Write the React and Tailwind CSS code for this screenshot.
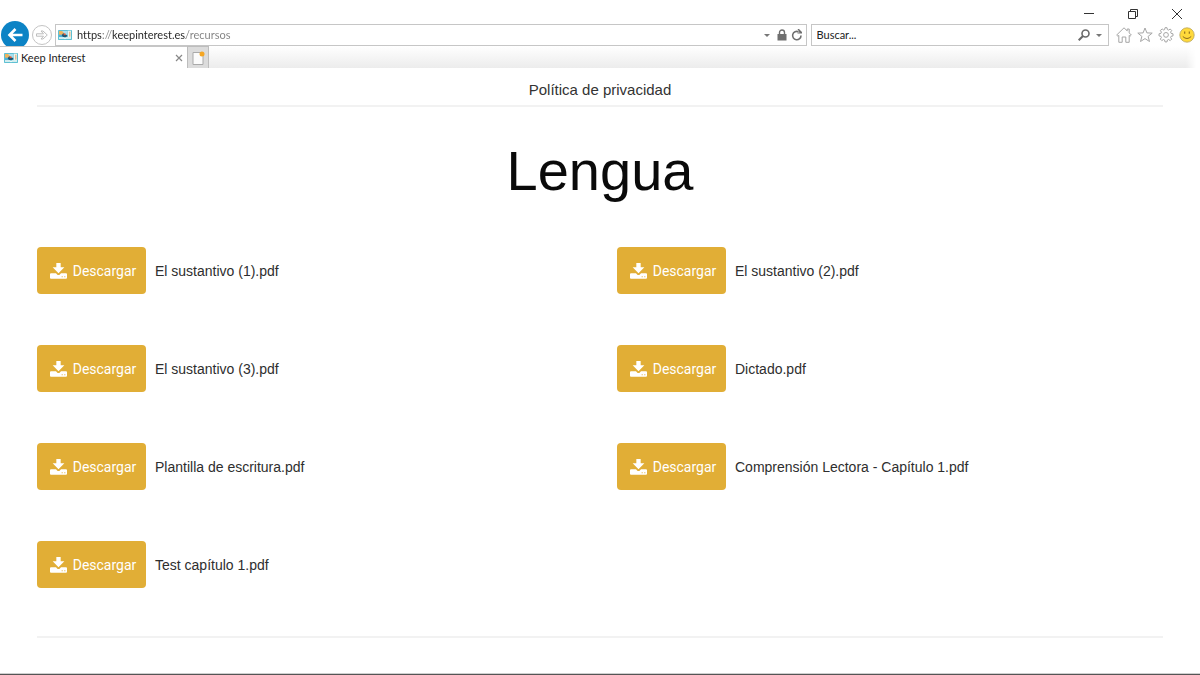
import { useState } from "react"

const resources = [
    "El sustantivo (1).pdf",
    "El sustantivo (2).pdf",
    "El sustantivo (3).pdf",
    "Dictado.pdf",
    "Plantilla de escritura.pdf",
    "Comprensión Lectora - Capítulo 1.pdf",
    "Test capítulo 1.pdf",
]

function Favicon() {
    return (
        <svg className="h-[10px] w-[14px] shrink-0" viewBox="0 0 42 30" aria-hidden="true">
            <rect width="42" height="30" rx="2" fill="#5fc0d3" />
            <rect x="3" y="3" width="25" height="12" fill="#a8dff0" />
            <path d="M3 3h9l6 6-5 6H3z" fill="#f0b45c" />
            <rect x="29" y="2" width="10" height="20" fill="#eef6f0" />
            <rect x="34" y="5" width="3" height="15" fill="#e2a06a" />
            <rect x="3" y="14" width="25" height="8" fill="#4cb2dc" />
            <path d="M11 16l5-7 3 5 9 1-3 6H15z" fill="#23566f" />
            <path d="M16 12l5-3 3 5-5 2z" fill="#e2603c" />
            <path d="M3 22h15l3 2 3-2h15v4H24l-3 2-3-2H3z" fill="#f7fbf8" />
        </svg>
    )
}

function DownloadIcon() {
    return (
        <svg className="h-4 w-[17px] shrink-0" viewBox="0 0 51 48" fill="white" aria-hidden="true">
            <path d="M19 0h13v13h11L25.500 31 8 13h11z" />
            <path
                fillRule="evenodd"
                d="M3 31h15l4 4q3.500 2.500 7 0l4-4h15q3 0 3 3v10q0 3-3 3H3q-3 0-3-3V34q0-3 3-3zM35 40v3h3v-3zM43 40v3h3v-3z"
            />
        </svg>
    )
}

function WindowControls() {
    return (
        <div className="flex h-6 items-center justify-end gap-8 pt-1 pr-[17px] text-[#333]">
            <button type="button" aria-label="Minimizar">
                <svg className="h-3 w-3" viewBox="0 0 12 12" stroke="currentColor">
                    <path d="M1 5.5h10" />
                </svg>
            </button>
            <button type="button" aria-label="Restaurar">
                <svg className="h-3 w-3" viewBox="0 0 12 12" fill="none" stroke="currentColor">
                    <path d="M1.500 3.500h7v7h-7zM3.500 3V1.500h7v7H9" />
                </svg>
            </button>
            <button type="button" aria-label="Cerrar">
                <svg className="h-3 w-3" viewBox="0 0 12 12" stroke="currentColor">
                    <path d="M1 1l10 10M11 1L1 11" />
                </svg>
            </button>
        </div>
    )
}

function Caret() {
    return (
        <svg className="h-[3px] w-[6px]" viewBox="0 0 6 3" fill="#777" aria-hidden="true">
            <path d="M0 0h6L3 3z" />
        </svg>
    )
}

function AddressBar() {
    const [url, setUrl] = useState("https://keepinterest.es/recursos")
    const [search, setSearch] = useState("")

    return (
        <div className="flex h-[22px] items-center pr-[5px] pl-px">
            <button
                type="button"
                aria-label="Atrás"
                className="-my-1 flex h-7 w-7 shrink-0 items-center justify-center rounded-full bg-[#0c83c5]">
                <svg className="h-4 w-4" viewBox="0 0 16 16" fill="none" stroke="white" strokeWidth="2.6">
                    <path d="M15.5 8H2M8.500 2L2.500 8l6 6" />
                </svg>
            </button>
            <button
                type="button"
                aria-label="Adelante"
                className="ml-[3px] flex h-5 w-5 shrink-0 items-center justify-center rounded-full border border-[#c4c4c4]">
                <svg className="h-3 w-3" viewBox="0 0 12 12" fill="none" stroke="#bdbdbd">
                    <path d="M.5 4.800h7L5 2h2L11.300 6 7 10H5l2.500-2.800h-7z" />
                </svg>
            </button>
            <div className="ml-[3px] flex h-[22px] flex-1 items-center border border-[#c6c6c6] pr-[3px] pl-[2px]">
                <Favicon />
                <input
                    className="ml-[5px] min-w-0 flex-1 bg-[linear-gradient(90deg,#222_26px,#888_26px,#888_35px,#222_35px,#222_109px,#808080_109px)] bg-clip-text text-[11px] text-transparent outline-none"
                    type="text"
                    aria-label="Dirección"
                    value={url}
                    onChange={(e) => setUrl(e.target.value)}
                />
                <button type="button" aria-label="Mostrar direcciones" className="mr-[7px]">
                    <Caret />
                </button>
                <svg className="mr-1 h-3 w-[10px]" viewBox="0 0 10 12" aria-hidden="true">
                    <path d="M2.500 6V3.500a2.500 2.500 0 0 1 5 0V6" fill="none" stroke="#6f6f6f" strokeWidth="1.400" />
                    <rect x=".5" y="5" width="9" height="6.500" fill="#6f6f6f" />
                </svg>
                <button type="button" aria-label="Actualizar">
                    <svg className="h-3 w-3" viewBox="0 0 12 12" aria-hidden="true">
                        <path d="M10 6.500A4.200 4.200 0 1 1 7.500 2.700" fill="none" stroke="#6f6f6f" strokeWidth="1.600" />
                        <path d="M6.500 0H8l3 3v1.500H6.500V3.500H8.500z" fill="#6f6f6f" />
                    </svg>
                </button>
            </div>
            <div className="ml-1 flex h-[22px] w-[25%] items-center border border-[#c6c6c6] pr-[6px] pl-[5px]">
                <input
                    className="min-w-0 flex-1 text-[11px] text-[#222] outline-none placeholder:text-[#222]"
                    type="text"
                    aria-label="Buscar"
                    placeholder="Buscar..."
                    value={search}
                    onChange={(e) => setSearch(e.target.value)}
                />
                <button type="button" aria-label="Buscar" className="mr-[6px]">
                    <svg className="h-3 w-3" viewBox="0 0 12 12" fill="none" stroke="#6a6a6a">
                        <circle cx="7.500" cy="4.500" r="3.500" strokeWidth="1.600" />
                        <path d="M5 7L.7 11.300" strokeWidth="2" />
                    </svg>
                </button>
                <button type="button" aria-label="Proveedores de búsqueda">
                    <Caret />
                </button>
            </div>
            <div className="ml-[7px] flex shrink-0 items-center gap-[5px]">
                <button type="button" aria-label="Inicio">
                    <svg className="h-4 w-4" viewBox="0 0 16 16" fill="none" stroke="#a6a6a6">
                        <path d="M8 .8L.7 8l1.200 1.200L2.800 8.400V15.300h3.400V10h3.600v5.300h3.400V8.400l.9.800L15.300 8 13.200 5.900V2h-2v1.900z" />
                    </svg>
                </button>
                <button type="button" aria-label="Favoritos">
                    <svg className="h-4 w-4" viewBox="0 0 16 16" fill="none" stroke="#a6a6a6">
                        <path d="M8 1l1.900 4.900 5.300.2-4.100 3.300 1.400 5.100L8 11.600l-4.500 2.900 1.400-5.100L.8 6.100l5.300-.2z" />
                    </svg>
                </button>
                <button type="button" aria-label="Herramientas">
                    <svg className="h-4 w-4" viewBox="0 0 16 16" fill="none" stroke="#a6a6a6">
                        <path d="M6.600 2.600L7 .7h2l.4 1.900 1.200.5 1.600-1.100 1.500 1.500-1.100 1.600.5 1.300 1.900.4v2.100l-1.900.4-.5 1.200 1.100 1.600-1.500 1.500-1.600-1.100-1.200.5-.4 1.900H7l-.4-1.900-1.200-.5-1.600 1.100-1.500-1.500 1.100-1.600-.5-1.200-1.900-.4V6.800l1.900-.4.5-1.300-1.100-1.600L4.200 2l1.600 1.100z" />
                        <circle cx="8" cy="7.900" r="2.400" />
                    </svg>
                </button>
                <button type="button" aria-label="Enviar comentarios">
                    <svg className="h-4 w-4" viewBox="0 0 16 16">
                        <circle cx="8" cy="8" r="7.200" fill="#ffd93b" stroke="#b9a45a" strokeWidth=".8" />
                        <path d="M5.700 4.500v2.300M10.300 4.500v2.300" stroke="#8b6a1c" strokeWidth="1.100" />
                        <path d="M3.800 9.500q4.200 4 8.400 0" fill="none" stroke="#8b6a1c" />
                    </svg>
                </button>
            </div>
        </div>
    )
}

function TabStrip() {
    return (
        <div className="relative flex h-[22px] bg-white">
            <div className="flex w-[187px] items-center border-t border-[#c6c6c6] bg-white pt-px pr-1 pl-1 text-[11px] text-[#222]">
                <Favicon />
                <span className="ml-[3px] flex-1">Keep Interest</span>
                <button type="button" aria-label="Cerrar pestaña">
                    <svg className="h-2 w-2" viewBox="0 0 8 8" stroke="#888" strokeWidth="1.200">
                        <path d="M1 1l6 6M7 1L1 7" />
                    </svg>
                </button>
            </div>
            <button
                type="button"
                aria-label="Nueva pestaña"
                className="flex w-[22px] items-center justify-center border border-b-0 border-[#bdbdbd] bg-[#dcdcdc]">
                <svg className="h-[14px] w-[14px]" viewBox="0 0 14 14">
                    <path d="M2 1.500h10v12H2z" fill="#fbfbfb" stroke="#aaa" />
                    <circle cx="11" cy="3" r="2.500" fill="#f5a623" />
                </svg>
            </button>
            <div className="mr-1 flex-1 bg-linear-to-b from-white to-[#ececec] mask-r-from-99%" />
        </div>
    )
}

function Resource({ name }) {
    return (
        <li className="flex items-center gap-[9px]">
            <button
                type="button"
                aria-label={`Descargar ${name}`}
                className="flex h-[47px] w-[109px] shrink-0 items-center justify-center gap-[6px] rounded-[4px] bg-[#e1ae36] pl-[3px] font-[Roboto,sans-serif] text-sm text-white">
                <DownloadIcon />
                Descargar
            </button>
            <span className="text-sm text-[#2e2e2e]">{name}</span>
        </li>
    )
}

function App() {
    return (
        <div className="flex min-h-screen flex-col border-b border-[#555] bg-white">
            <header className="font-[Lato,'Noto_Sans',sans-serif] [font-variant-ligatures:none]">
                <WindowControls />
                <AddressBar />
                <TabStrip />
            </header>
            <main className="mx-[37px] flex-1 font-['Liberation_Sans',Arial,sans-serif]">
                <nav className="flex h-[39px] justify-center border-b-2 border-[#f2f2f2] pt-[10px]">
                    <a href="#privacidad" className="text-[15px] leading-6 text-[#333]">
                        Política de privacidad
                    </a>
                </nav>
                <h1 className="mt-8 text-center text-[56px] leading-[64px] text-[#0a0a0a]">Lengua</h1>
                <ul className="mt-11 grid grid-cols-2 gap-x-[34px] gap-y-[51px]">
                    {resources.map((name) => (
                        <Resource key={name} name={name} />
                    ))}
                </ul>
                <hr className="mt-12 border-t-2 border-[#f2f2f2]" />
            </main>
            <div className="h-px bg-[#cfcfcf]" />
        </div>
    )
}

export default App
